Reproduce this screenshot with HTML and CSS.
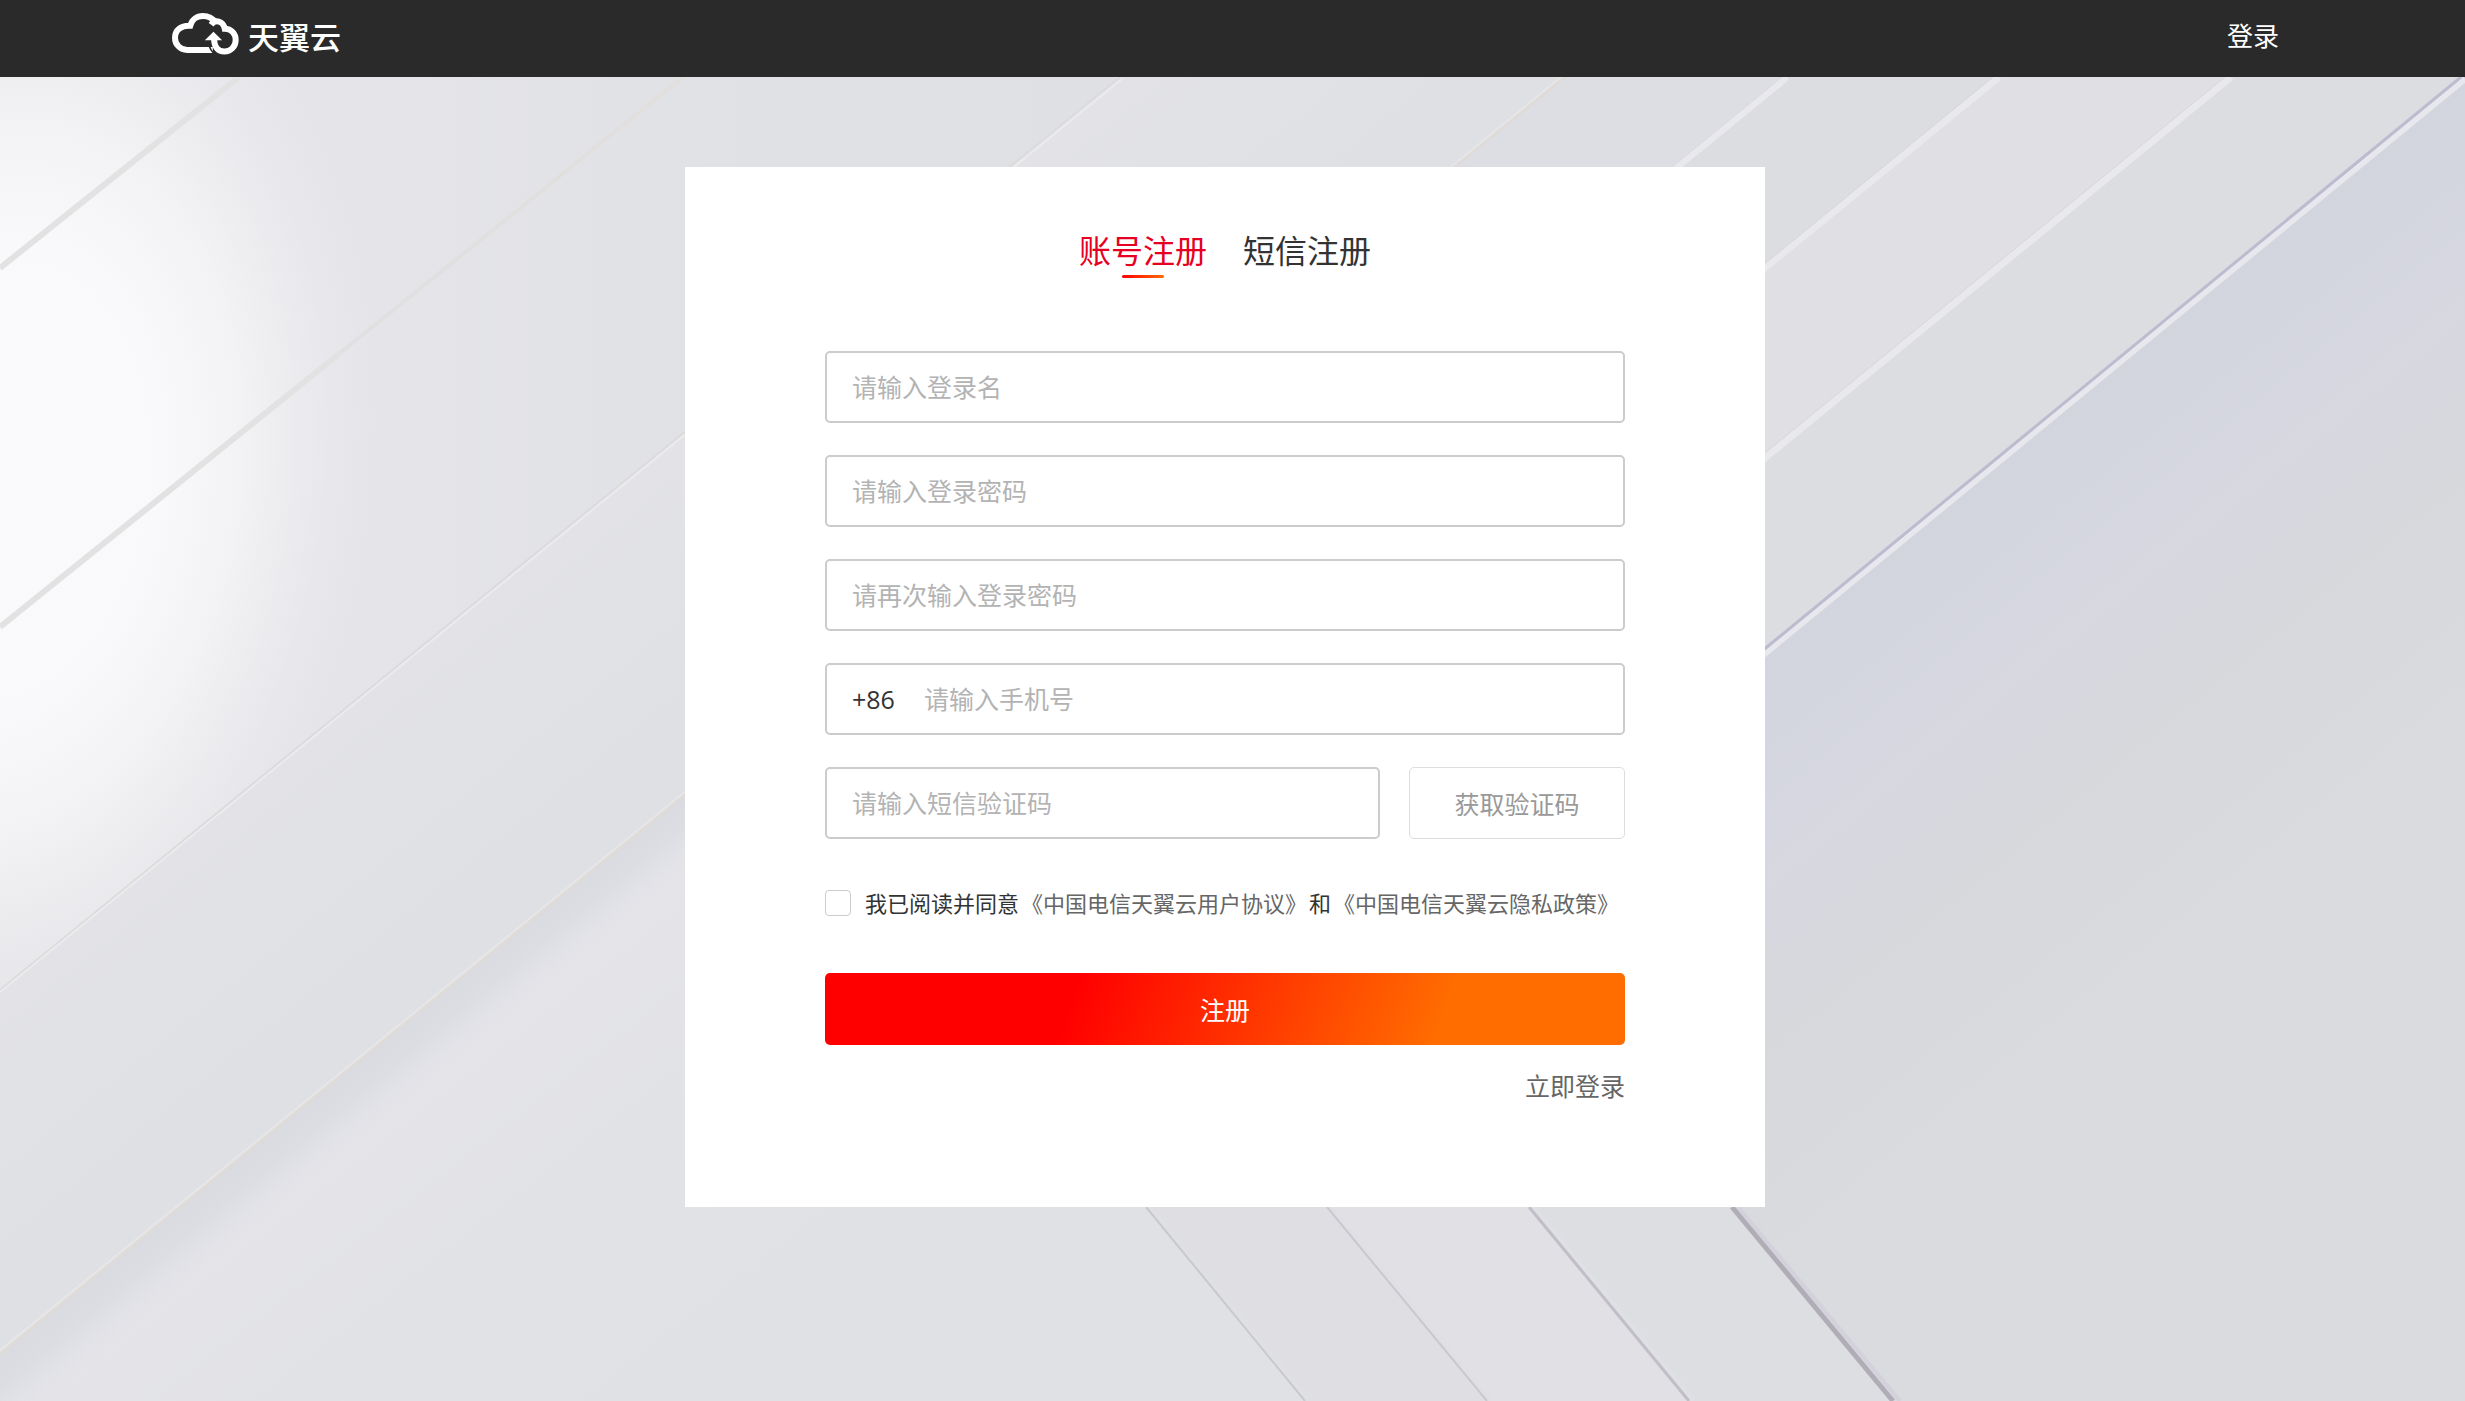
FILE: index.html
```
<!DOCTYPE html>
<html lang="zh-CN">
<head>
    <meta charset="UTF-8">
    <meta name="viewport" content="width=device-width, initial-scale=1.0">
    <title>注册</title>
    <link rel="stylesheet" href="styles.css">
</head>
<body>

    <header class="header">
        <a class="logo" href="#">
            <svg class="logo-icon" viewBox="96 38 202 126" fill="none" stroke="#fff" stroke-width="18" aria-hidden="true">
                <path d="M219 149H142C120 149 105 132 105 112C105 90 124 74 151 76C156 57 171 47 189 47C208 47 220 56 227 67" />
                <path d="M214 73C226 56 250 61 255 85C275 85 288 101 288 119C288 139 273 154 254 154C235 154 223 140 223 116" />
                <path d="M195 120L221 94L247 120Z" fill="#fff" stroke="none" />
                <path d="M207 135C211 147 216 154 224 162" stroke="#2a2a2a" stroke-width="5" />
            </svg>
            <span class="logo-text">天翼云</span>
        </a>
        <a class="header-login" href="#">登录</a>
    </header>

    <main class="main">
        <svg class="backdrop" viewBox="0 77 2465 1324" preserveAspectRatio="xMidYMin slice" aria-hidden="true">
            <defs>
                <linearGradient id="base" x1="0" y1="0" x2="1" y2="0">
                    <stop offset="0" stop-color="#e5e5e9" />
                    <stop offset="0.15" stop-color="#e4e4e9" />
                    <stop offset="0.3" stop-color="#e0e1e5" />
                    <stop offset="1" stop-color="#dcdde0" />
                </linearGradient>
                <radialGradient id="glow" gradientUnits="userSpaceOnUse" cx="0" cy="0" r="1" gradientTransform="translate(0 480) rotate(8) scale(400 600)">
                    <stop offset="0" stop-color="#fafafc" />
                    <stop offset="0.4" stop-color="#f9f9fb" />
                    <stop offset="0.6" stop-color="#f4f4f6" stop-opacity="0.9" />
                    <stop offset="0.8" stop-color="#ececef" stop-opacity="0.6" />
                    <stop offset="1" stop-color="#e5e5e9" stop-opacity="0" />
                </radialGradient>
                <linearGradient id="band" gradientUnits="userSpaceOnUse" x1="343" y1="710" x2="483" y2="882">
                    <stop offset="0" stop-color="#e3e3e7" />
                    <stop offset="1" stop-color="#dee0e4" />
                </linearGradient>
                <linearGradient id="shade" gradientUnits="userSpaceOnUse" x1="343" y1="1073" x2="385" y2="1124">
                    <stop offset="0" stop-color="#d9dbe1" />
                    <stop offset="0.4" stop-color="#dadce2" stop-opacity="0.8" />
                    <stop offset="1" stop-color="#e3e3e8" stop-opacity="0" />
                </linearGradient>
                <linearGradient id="low" gradientUnits="userSpaceOnUse" x1="343" y1="1073" x2="600" y2="1400">
                    <stop offset="0" stop-color="#e4e4e9" />
                    <stop offset="1" stop-color="#e0e1e4" />
                </linearGradient>
                <linearGradient id="right" gradientUnits="userSpaceOnUse" x1="2112" y1="362" x2="2440" y2="762">
                    <stop offset="0" stop-color="#d3d5de" />
                    <stop offset="0.3" stop-color="#d6d7e0" />
                    <stop offset="0.6" stop-color="#d7d8dc" />
                    <stop offset="1" stop-color="#dadbde" />
                </linearGradient>
                <linearGradient id="seam" x1="0" y1="1" x2="1" y2="0">
                    <stop offset="0" stop-color="#e0e0e1" />
                    <stop offset="1" stop-color="#e2dfdd" />
                </linearGradient>
            </defs>

            <rect y="77" width="2465" height="1324" fill="url(#base)" />
            <rect y="77" width="500" height="1100" fill="url(#glow)" />

            <!-- panels on the left -->
            <path d="M0 990L1120 77H1564L0 1353Z" fill="url(#band)" />
            <path d="M0 1353L1564 77V1401H0Z" fill="url(#low)" />
            <path d="M0 1353L1564 77H1700L0 1464Z" fill="url(#shade)" />

            <!-- panels on the right -->
            <path d="M1564 77H1783L1564 256L1400 211Z" fill="#dddee4" />
            <path d="M1783 77H1994L1600 402V226Z" fill="#dcdde1" />
            <path d="M1994 77H2227L1700 508V319Z" fill="#e0dfe4" />
            <path d="M2227 77H2462L1700 702V508Z" fill="#dcdde0" />
            <path d="M2462 77H2465V1401H1893L1564 1007V816Z" fill="url(#right)" />

            <!-- panels under the form -->
            <path d="M1146 1207H1327L1487 1401H1305Z" fill="#dfdee3" />
            <path d="M1327 1207H1528L1689 1401H1487Z" fill="#e1e1e5" />
            <path d="M1528 1207H1731L1893 1401H1689Z" fill="#dddee2" />

            <g fill="none">
                <path d="M0 268L239 77" stroke="#e2e2e2" stroke-width="6" />
                <path d="M0 627L340 353" stroke="#e2e2e2" stroke-width="6" />
                <path d="M340 353L683 77" stroke="url(#seam)" stroke-width="4" />
                <path d="M0 990L1120 77" stroke="#dcdbdb" stroke-width="2" />
                <path d="M0 992L1122 79" stroke="#ebebed" stroke-width="2" />
                <path d="M0 1351L1562 77" stroke="#e6e6e8" stroke-width="3" />
                <path d="M0 1354L1565 77" stroke="#dedbd9" stroke-width="3" />

                <path d="M1787 77L1600 230M1999 77L1700 321M2231 77L1700 511" stroke="#e8e8ed" stroke-width="7" />
                <path d="M1782 77L1600 226M1993 77L1700 317M2225 77L1700 506" stroke="#d6d7db" stroke-width="1" />
                <path d="M2465 79L1700 707" stroke="#e7e7ed" stroke-width="6" />
                <path d="M2461 77L1700 702" stroke="#bcbbcf" stroke-width="3" />

                <path d="M1149 1207L1308 1401M1330 1207L1490 1401M1532 1207L1693 1401" stroke="#dee0e4" stroke-width="6" />
                <path d="M1146 1207L1305 1401M1327 1207L1487 1401" stroke="#c9c8ce" stroke-width="2" />
                <path d="M1529 1207L1689 1401" stroke="#c1bec7" stroke-width="3" />
                <path d="M1738 1207L1900 1401" stroke="#d3d1dc" stroke-width="4" />
                <path d="M1732 1207L1893 1401" stroke="#b1adb7" stroke-width="5" />
            </g>
        </svg>

        <div class="register-container">
            <div class="tabs">
                <button class="tab active" type="button">账号注册</button>
                <button class="tab" type="button">短信注册</button>
            </div>

            <form class="register-form">
                <input class="field" type="text" placeholder="请输入登录名" aria-label="登录名">
                <input class="field" type="password" placeholder="请输入登录密码" aria-label="登录密码">
                <input class="field" type="password" placeholder="请再次输入登录密码" aria-label="再次输入登录密码">

                <div class="field phone">
                    <label for="phone">+86</label>
                    <input id="phone" type="tel" placeholder="请输入手机号">
                </div>

                <div class="code-row">
                    <input class="field" type="text" placeholder="请输入短信验证码" aria-label="短信验证码">
                    <button class="code-button" type="button">获取验证码</button>
                </div>

                <div class="agreement">
                    <input id="agree" type="checkbox">
                    <label for="agree">我已阅读并同意</label>
                    <a href="#">《中国电信天翼云用户协议》</a>
                    <span>和</span>
                    <a href="#">《中国电信天翼云隐私政策》</a>
                </div>

                <button class="submit" type="submit">注册</button>
                <a class="login-link" href="#">立即登录</a>
            </form>
        </div>
    </main>

</body>
</html>
```
FILE: styles.css
```
* {
    box-sizing: border-box;
}

body {
    display: flex;
    flex-direction: column;
    min-height: 100vh;
    margin: 0;
    font-family: "Open Sans", "Noto Sans CJK SC", sans-serif;
    font-size: 25px;
    color: #333;
}

input, button {
    font: inherit;
    color: inherit;
}

button {
    cursor: pointer;
}

a {
    color: #666;
    text-decoration: none;
}

.header {
    display: flex;
    justify-content: space-between;
    align-items: flex-start;
    height: 77px;
    padding: 13px 186px 0 172px;
    background-color: #2a2a2a;
}

.logo {
    display: flex;
    gap: 9px;
    color: white;
}

.logo-icon {
    width: 67px;
    height: 42px;
}

.logo-text {
    font-size: 31px;
    font-weight: 500;
    line-height: 48px;
}

.header-login {
    font-size: 26px;
    line-height: 46px;
    color: white;
}

.main {
    position: relative;
    flex: 1;
    padding: 90px 15px 90px 0;
    overflow: hidden;
}

.backdrop {
    position: absolute;
    inset: 0;
    width: 100%;
    height: 100%;
}

.register-container {
    position: relative;
    max-width: 1080px;
    min-height: 1040px;
    margin: 0 auto;
    padding: 60px 140px;
    background-color: white;
}

.tabs {
    display: flex;
    justify-content: center;
    gap: 36px;
}

.tab {
    position: relative;
    padding: 0;
    border: none;
    background: none;
    font-size: 32px;
    line-height: 48px;
}

.tab.active {
    color: #e60021;
}

.tab.active::after {
    content: "";
    position: absolute;
    left: 50%;
    bottom: -3px;
    width: 42px;
    height: 3px;
    margin-left: -21px;
    border-radius: 2px;
    background: linear-gradient(90deg, #ff0000, #ff6d00);
}

.register-form {
    display: flex;
    flex-direction: column;
    gap: 32px;
    margin-top: 76px;
}

.field {
    width: 100%;
    height: 72px;
    padding: 0 25px;
    border: 2px solid #ccc;
    border-radius: 5px;
    background-color: white;
}

input::placeholder {
    color: #b3b3b3;
    opacity: 1;
}

.phone {
    display: flex;
    align-items: center;
    gap: 29px;
}

.phone input {
    flex: 1;
    min-width: 0;
    padding: 0;
    border: none;
    outline: none;
}

.code-row {
    display: flex;
    gap: 29px;
}

.code-row .field {
    flex: 1;
    min-width: 0;
}

.code-button {
    width: 216px;
    height: 72px;
    border: 1px solid #ddd;
    border-radius: 5px;
    background-color: white;
    color: #999;
}

.agreement {
    display: flex;
    align-items: center;
    gap: 2px;
    margin: 16px 0 22px;
    font-size: 22px;
    line-height: 32px;
    white-space: nowrap;
}

.agreement input {
    appearance: none;
    width: 26px;
    height: 26px;
    margin: 0 12px 0 0;
    border: 1px solid #ccc;
    border-radius: 4px;
    background-color: white;
}

.agreement input:checked {
    background-color: #ff0000;
}

.submit {
    height: 72px;
    border: none;
    border-radius: 5px;
    background: linear-gradient(110deg, #ff0000 31%, #ff6d00 77%);
    color: white;
}

.login-link {
    align-self: flex-end;
    margin-top: -9px;
    line-height: 36px;
}

.login-link:hover {
    text-decoration: underline;
}
```
